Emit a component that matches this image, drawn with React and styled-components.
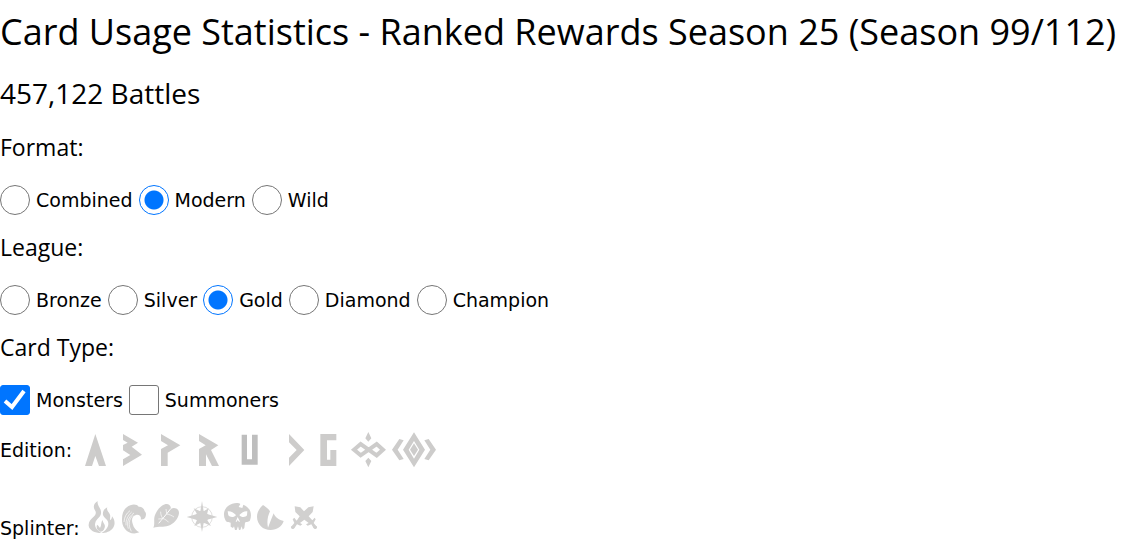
import React, { useState } from "react";
import styled, { createGlobalStyle } from "styled-components";

const GlobalStyle = createGlobalStyle`
  *, *::before, *::after {
    box-sizing: border-box;
  }

  body {
    margin: 0;
    background: #ffffff;
    color: #000000;
    font-family: Verdana, "DejaVu Sans", sans-serif;
    font-size: 19px;
    line-height: 24px;
  }
`;

const Page = styled.main`
  display: flex;
  flex-direction: column;
  gap: 12px;
  padding-top: 4px;
`;

const Title = styled.h2`
  margin: 0;
  font-family: "Segoe UI", "Open Sans", sans-serif;
  font-size: 36px;
  font-weight: 400;
  line-height: 56px;
`;

const Subtitle = styled.h3`
  margin: 0;
  font-family: "Segoe UI", "Open Sans", sans-serif;
  font-size: 28px;
  font-weight: 400;
  line-height: 43px;
`;

const Group = styled.fieldset`
  min-width: 0;
  margin: 0;
  padding: 0;
  border: 0;
`;

const GroupTitle = styled.legend`
  padding: 0;
  font-family: "Segoe UI", "Open Sans", sans-serif;
  font-size: 23px;
  line-height: 40px;
`;

const Options = styled.div`
  display: flex;
  flex-wrap: wrap;
  gap: 6px;
  padding-top: 18px;
`;

const Option = styled.label`
  display: flex;
  align-items: center;
  gap: 6px;
  cursor: pointer;
`;

const Radio = styled.input.attrs({ type: "radio" })`
  appearance: none;
  width: 30px;
  height: 30px;
  margin: 0;
  border: 1px solid #767676;
  border-radius: 50%;
  background: #ffffff;

  &:checked {
    border-color: #0075ff;
    background: radial-gradient(circle, #0075ff 9px, #ffffff 10px);
  }
`;

const CheckBox = styled.span`
  display: grid;
  width: 30px;
  height: 30px;

  & > * {
    grid-area: 1 / 1;
  }

  & > svg {
    width: 30px;
    height: 30px;
    pointer-events: none;
  }
`;

const Check = styled.input.attrs({ type: "checkbox" })`
  appearance: none;
  width: 30px;
  height: 30px;
  margin: 0;
  border: 1px solid #767676;
  border-radius: 3px;
  background: #ffffff;

  &:checked {
    border-color: #0075ff;
    background: #0075ff;
  }
`;

const IconRow = styled.div`
  display: flex;
  align-items: ${(props) => props.$align};
  gap: 4px;
  margin-top: ${(props) => props.$space}px;
`;

const Icons = styled.div`
  display: flex;
`;

const IconButton = styled.button`
  display: block;
  padding: 0;
  border: 0;
  background: none;
  color: ${(props) => props.$color};
  cursor: pointer;

  & > svg {
    display: block;
  }
`;

const formats = ["Combined", "Modern", "Wild"];
const leagues = ["Bronze", "Silver", "Gold", "Diamond", "Champion"];
const cardTypes = ["Monsters", "Summoners"];

// every drawing uses three units per pixel
const editions = [
  { name: "Alpha", x: -12, width: 38, art: <path d="M46 27 78 123H57L46 93 36 123H15Z" /> },
  { name: "Beta", x: 102, width: 38, art: <path d="M129 27 174 53 155 65 186 89 129 123V103L151 90 129 76V60L143 53 129 45Z" /> },
  { name: "Promo", x: 216, width: 38, art: <path d="M243 27 301 61 263 83V123H243V72L264 61 243 48Z" /> },
  { name: "Reward", x: 330, width: 38, art: <path d="M357 27 415 61 393 75 417 123H396L378 88V123H357V72L377 61 357 48Z" /> },
  { name: "Untamed", x: 84, width: 42, color: "#bebebe", art: <path d="M125 29H141V103H156V29H173V119H125Z" /> },
  { name: "Dice", x: 210, width: 40, art: <path d="M267 27 313 75 267 123V98L290 75 267 52Z" /> },
  { name: "Gladius", x: 0, width: 37, art: <path d="M31 27H79V46H51V104H61V75H79V123H31Z" /> },
  {
    name: "Chaos Legion", x: 111, width: 43,
    art: (
      <>
        <path d="M132 74 152 57 200 91 219 74 200 57 152 91Z" fill="none" stroke="currentColor" strokeWidth="12" />
        <path d="M175 21 184 40 175 50 166 40ZM175 127 166 108 175 98 184 108Z" />
      </>
    ),
  },
  {
    name: "Rebellion", x: 240, width: 48,
    art: (
      <>
        <path d="M246 74 268 42 281 46 263 74 281 102 268 106ZM378 74 356 42 343 46 361 74 343 102 356 106Z" />
        <path fillRule="evenodd" d="M312 22 345 74 312 127 279 74ZM312 48 296 74 312 101 328 74Z" />
        <path d="M312 55 324 74 312 93 300 74Z" />
      </>
    ),
  },
];

const splinters = [
  {
    name: "Fire", x: 12, width: 35,
    art: (
      <>
        <path d="M53 18C50 31 65 40 63 55C62 67 49 72 46 83C43 91 47 101 56 108C59 111 62 113 64 114C44 114 28 106 26 92C25 80 32 73 40 66C48 59 50 52 44 44C38 34 43 24 53 18Z" />
        <path d="M82 37C78 46 87 51 90 59C92 65 89 70 91 76C94 73 96 69 96 64C104 73 107 88 99 99C91 110 78 114 64 114C76 107 85 98 85 86C85 73 73 71 69 60C67 49 73 41 82 37Z" />
        <path d="M68 74C67 83 78 88 74 98C71 107 66 110 60 110C51 105 48 97 51 89C56 92 58 96 60 99C65 91 62 82 68 74Z" />
      </>
    ),
  },
  {
    name: "Water", x: 117, width: 31,
    art: (
      <>
        <path d="M126 73C126 49 135 37 151 31C160 26 172 28 176 35C186 34 192 40 194 49C200 54 198 62 196 67C193 73 187 75 182 73C185 66 179 58 170 59C158 61 153 72 158 86C161 99 169 107 178 112C163 119 145 115 135 102C127 92 126 82 126 73Z" />
        <path d="M132 81C133 66 139 55 150 47M138 91C137 74 144 61 155 51M145 101C139 82 145 66 162 54M154 109C144 91 146 72 159 61" fill="none" stroke="#fff" strokeWidth="2" />
      </>
    ),
  },
  {
    name: "Earth", x: 210, width: 34,
    art: (
      <>
        <path d="M220 98C226 86 219 73 226 58C232 43 246 27 261 27C269 28 272 33 273 41C284 36 297 41 297 54C296 70 281 88 265 92C250 97 237 93 220 98Z" />
        <path d="M236 85C244 75 258 60 273 40" fill="none" stroke="#fff" strokeWidth="3" />
        <path d="M248 70C243 63 242 56 242 50M260 56 258 42M248 70C256 73 262 77 266 82M260 57C268 58 276 62 282 66M247 71 235 72" fill="none" stroke="#fff" strokeWidth="2" />
      </>
    ),
  },
  {
    name: "Life", x: 12, width: 36,
    art: (
      <>
        <circle cx="66" cy="66" r="31" fill="none" stroke="currentColor" strokeWidth="2" />
        <path d="M66 18 71 49 86 40 81 57 112 66 81 74 93 93 75 85 71 84 66 111 61 84 43 93 51 75 20 66 51 57 41 40 61 49Z" />
        <circle cx="66" cy="66" r="19" />
      </>
    ),
  },
  {
    name: "Death", x: 120, width: 34,
    art: (
      <>
        <path d="M136 75C128 60 132 43 144 33C156 24 174 22 181 27L176 36 187 39 190 29C209 36 218 55 210 76C208 82 200 80 195 83L193 99 188 104 185 94 181 105H177L174 94 170 105H165L162 94 159 99 152 95 152 83C146 81 139 83 136 75Z" />
        <path d="M143 49C153 48 160 53 168 60C163 68 150 68 145 61ZM202 49C192 48 186 53 178 60C183 68 197 68 201 61ZM173 66 167 80H170L173 75 177 80H180Z" fill="#fff" />
      </>
    ),
  },
  {
    name: "Dragon", x: 222, width: 34,
    art: <path d="M249 30C256 34 265 41 270 49C263 64 260 80 264 98C270 82 276 68 281 55C285 67 298 76 311 78C306 94 291 105 272 105C249 105 231 88 231 65C231 51 239 39 249 30Z" />,
  },
  {
    name: "Neutral", x: 324, width: 34,
    art: (
      <>
        <path d="M344 34 361 37 372 49 385 37 401 34 398 51 386 64 397 76 404 68 407 73 401 84 411 96 407 102 401 100 394 88 383 92 378 88 386 84 373 74 360 84 367 88 361 92 351 88 343 100 337 102 333 96 343 84 338 73 343 68 350 77 359 64 346 51Z" />
        <circle cx="338" cy="97" r="5" />
        <circle cx="406" cy="97" r="5" />
      </>
    ),
  },
];

const RadioGroup = ({ title, name, options, value, onChange }) => (
  <Group>
    <GroupTitle>{title}</GroupTitle>
    <Options>
      {options.map((option) => (
        <Option key={option}>
          <Radio name={name} value={option} checked={value === option} onChange={() => onChange(option)} />
          {option}
        </Option>
      ))}
    </Options>
  </Group>
);

const IconFilter = ({ label, icons, color, top, height, align, space }) => {
  const [selected, setSelected] = useState([]);

  const toggle = (name) => {
    setSelected(selected.includes(name) ? selected.filter((n) => n !== name) : [...selected, name]);
  };

  return (
    <IconRow $align={align} $space={space}>
      <span>{label}</span>
      <Icons role="group" aria-label={label}>
        {icons.map((icon) => (
          <IconButton
            key={icon.name}
            type="button"
            aria-label={icon.name}
            aria-pressed={selected.includes(icon.name)}
            $color={selected.includes(icon.name) ? "#555555" : icon.color || color}
            onClick={() => toggle(icon.name)}
          >
            <svg
              width={icon.width}
              height={height}
              viewBox={`${icon.x} ${top} ${icon.width * 3} ${height * 3}`}
              fill="currentColor"
              aria-hidden="true"
            >
              {icon.art}
            </svg>
          </IconButton>
        ))}
      </Icons>
    </IconRow>
  );
};

const App = () => {
  const [format, setFormat] = useState("Modern");
  const [league, setLeague] = useState("Gold");
  const [types, setTypes] = useState({ Monsters: true, Summoners: false });

  return (
    <>
      <GlobalStyle />
      <Page>
        <Title>Card Usage Statistics - Ranked Rewards Season 25 (Season 99/112)</Title>
        <Subtitle>457,122 Battles</Subtitle>

        <RadioGroup title="Format:" name="format" options={formats} value={format} onChange={setFormat} />
        <RadioGroup title="League:" name="league" options={leagues} value={league} onChange={setLeague} />

        <Group>
          <GroupTitle>Card Type:</GroupTitle>
          <Options>
            {cardTypes.map((type) => (
              <Option key={type}>
                <CheckBox>
                  <Check checked={types[type]} onChange={() => setTypes({ ...types, [type]: !types[type] })} />
                  {types[type] && (
                    <svg viewBox="0 0 30 30" aria-hidden="true">
                      <path d="M5 16 12 22 24 6" fill="none" stroke="#fff" strokeWidth="4" />
                    </svg>
                  )}
                </CheckBox>
                {type}
              </Option>
            ))}
          </Options>
        </Group>

        <IconFilter label="Edition:" icons={editions} color="#cdcccb" top={21} height={36} align="center" space={5} />
        <IconFilter label="Splinter:" icons={splinters} color="#d1d0cf" top={15} height={40} align="flex-end" space={20} />
      </Page>
    </>
  );
};

export default App;
